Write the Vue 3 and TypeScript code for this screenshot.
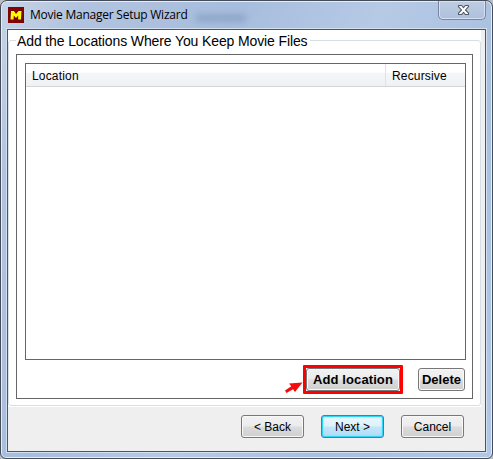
<script setup lang="ts">
import { ref } from 'vue'

interface Column {
  key: string
  label: string
}

const columns: Column[] = [
  { key: 'location', label: 'Location' },
  { key: 'recursive', label: 'Recursive' },
]
const title = ref('Movie Manager Setup Wizard')
</script>

<template>
  <div class="window">
    <header class="titlebar">
      <svg class="app-icon" width="16" height="16" viewBox="0 0 16 16">
        <rect width="16" height="16" fill="#7d0505" />
        <path d="M3 4H6L8 7L10.5 4H13.5L13 12.5H10.2V8.5L8 11L5.8 8.5L5.5 12.5H2.5Z" fill="#ffff00" />
      </svg>
      <span class="title">{{ title }}</span>
      <span class="smudge"></span>
      <button class="close" aria-label="Close">
        <svg width="13" height="12" viewBox="0 0 13 12">
          <path d="M1.5 1.5H4.7L6.5 3.7L8.3 1.5H11.5V2.7L8.5 6L11.5 9.2V10.5H8.3L6.5 8.4L4.7 10.5H1.5V9.2L4.5 6L1.5 2.7Z" fill="#fff" stroke="#535968" stroke-width="1.1" stroke-linejoin="round" />
        </svg>
      </button>
    </header>
    <main class="client">
      <div class="page">
        <fieldset class="group">
          <legend><span class="caption">Add the Locations Where You Keep Movie Files</span></legend>
          <div class="panel">
            <div class="table">
              <div class="thead">
                <div v-for="c in columns" :key="c.key" class="th" :class="c.key">{{ c.label }}</div>
              </div>
            </div>
            <div class="actions">
              <svg class="arrow" width="18" height="12" viewBox="0 0 18 12">
                <path d="M17.5 0.5L4 1.5L6.3 4.2L0 8.5L1.5 11L8 7.2L10 10Z" fill="#f50b0b" />
              </svg>
              <div class="highlight"><button class="btn bold add">Add location</button></div>
              <button class="btn bold delete">Delete</button>
            </div>
          </div>
        </fieldset>
      </div>
      <footer class="footer">
        <button class="btn">&lt; Back</button>
        <button class="btn primary">Next &gt;</button>
        <button class="btn">Cancel</button>
      </footer>
    </main>
  </div>
</template>

<style>
body { margin: 0; background: #b9bec6; overflow: hidden; }
</style>

<style scoped>
* { box-sizing: border-box; }
.window {
  width: 493px;
  height: 459px;
  padding: 0 6px 6px;
  border: 1px solid #454b57;
  border-radius: 7px 7px 6px 6px;
  box-shadow: inset 0 0 0 1px #e4edf8;
  background: linear-gradient(115deg, #c7d4e6 0, #b1c3df 12%, #a7bddd 34%, #b6cae5 55%, #a8bfdf 75%, #b0c7e5 100%);
  font-family: "Liberation Sans", Arial, sans-serif;
  color: #000;
}
.titlebar {
  display: flex;
  align-items: flex-start;
  height: 28px;
}
.app-icon { margin: 6px 0 0 1px; flex: none; }
.title {
  margin: 5px 0 0 6px;
  width: 158px;
  font: 12px/18px "Open Sans", "Noto Sans", sans-serif;
  letter-spacing: -0.24px;
  white-space: nowrap;
}
.smudge {
  margin: 13px 0 0 8px;
  width: 50px;
  height: 8px;
  background: #7590b8;
  opacity: 0.5;
  filter: blur(3px);
}
.close {
  display: flex;
  justify-content: center;
  align-items: flex-start;
  margin-left: auto;
  width: 48px;
  height: 19px;
  padding: 3px 0 0 2px;
  border: 1px solid #7886a0;
  border-top: 0;
  border-radius: 0 0 5px 5px;
  box-shadow: inset 0 0 0 1px #d5e0f0;
  background: linear-gradient(#bfcde3, #adc0dc);
}
.client {
  height: 423px;
  width: 479px;
  border: 1px solid #4d5565;
  background: #efefef;
  box-shadow: 0 0 0 1px #d3e0f1;
}
.page {
  width: 473px;
  height: 377px;
  padding: 1px 0 0 0;
  background: #fff;
}
.group {
  width: 473px;
  height: 375px;
  margin: 0;
  padding: 4px 7px 6px;
  min-width: 0;
  border: 1px solid #d5dfe5;
  border-radius: 3px;
}
legend {
  height: 19px;
  width: 294px;
  padding: 0 1px;
  white-space: nowrap;
}
.caption {
  display: block;
  font-size: 14px;
  line-height: 20px;
  letter-spacing: -0.12px;
}
.panel {
  width: 457px;
  height: 345px;
  padding: 8px 7px 0 8px;
  border: 1px solid #666;
}
.table {
  width: 441px;
  height: 297px;
  border: 1px solid #666;
}
.thead {
  display: flex;
  height: 23px;
  border-bottom: 1px solid #d3d5d8;
  background: linear-gradient(#fff 0, #fff 38%, #f5f6f7 42%, #f0f1f3 100%);
}
.th { padding-left: 6px; font-size: 12px; line-height: 24px; letter-spacing: 0.17px; }
.location { width: 360px; border-right: 1px solid #dfe2e6; }
.actions {
  display: flex;
  align-items: flex-start;
  justify-content: flex-end;
  height: 29px;
  margin-top: 5px;
}
.arrow { margin: 17px 0 0; flex: none; }
.highlight {
  width: 100px;
  height: 29px;
  margin-right: 15px;
  border: 3px solid #fe0000;
  border-radius: 1px;
}
.btn {
  display: block;
  width: 63px;
  height: 23px;
  padding: 0;
  border: 1px solid #777;
  border-radius: 3px;
  box-shadow: inset 0 0 0 1px #f8f8f8;
  background: linear-gradient(#f2f2f2 0, #ebebeb 48%, #dcdcdc 52%, #cfcfcf 100%);
  font: 12px/22px "Liberation Sans", Arial, sans-serif;
  color: #000;
  white-space: nowrap;
}
.bold { font-size: 13px; font-weight: bold; line-height: 21px; }
.add { width: 94px; letter-spacing: 0.1px; }
.delete { width: 47px; margin-top: 3px; }
.primary {
  border-color: #3c7fb1;
  box-shadow: inset 0 0 0 1px #34d3fa, inset 0 0 2px 1px #64dcfa;
  background: linear-gradient(#eaf6fd 0, #def2fc 48%, #c2e6fa 52%, #b0dcf4 100%);
}
.footer {
  display: flex;
  gap: 17px;
  justify-content: flex-end;
  padding: 8px 21px 0 0;
}
</style>
